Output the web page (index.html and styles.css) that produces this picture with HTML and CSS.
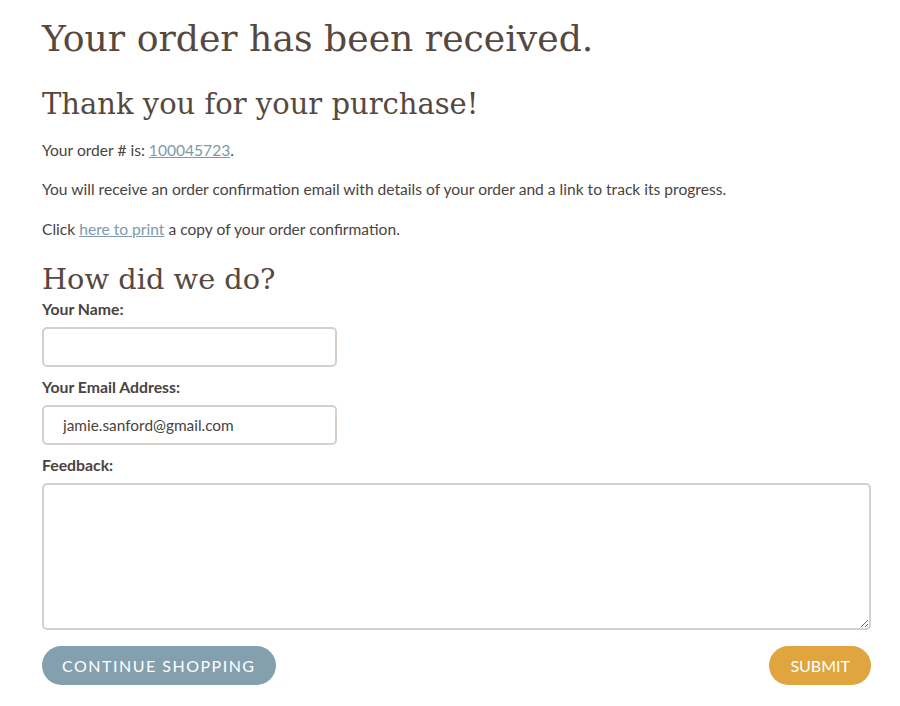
FILE: index.html
```html
<!DOCTYPE html>
<html lang="en">
<head>
    <meta charset="UTF-8">
    <meta name="viewport" content="width=device-width, initial-scale=1.0">
    <title>Order Received</title>
    <link rel="stylesheet" href="styles.css">
</head>
<body>
    <div class="page">
        <h1>Your order has been received.</h1>
        <h2>Thank you for your purchase!</h2>

        <p>Your order # is: <a href="#">100045723</a>.</p>
        <p>You will receive an order confirmation email with details of your order and a link to track its progress.</p>
        <p>Click <a href="#">here to print</a> a copy of your order confirmation.</p>

        <!-- Feedback form -->
        <form class="feedback">
            <h2 class="form-title">How did we do?</h2>
            <label for="name">Your Name:</label>
            <input type="text" id="name" class="field">

            <label for="email">Your Email Address:</label>
            <input type="email" id="email" class="field" value="jamie.sanford@gmail.com">

            <label for="feedback">Feedback:</label>
            <textarea id="feedback"></textarea>

            <div class="actions">
                <a href="#" class="btn btn-continue">Continue Shopping</a>
                <button type="submit" class="btn btn-submit">Submit</button>
            </div>
        </form>
    </div>
</body>
</html>
```

FILE: styles.css
```css
body {
    margin: 0;
    padding: 0;
    font-family: Lato, "Open Sans", sans-serif;
    font-size: 15.6px;
    color: #4a4342;
    background-color: #ffffff;
}
.page {
    padding: 14px 29px 0 42px;
}
h1, h2 {
    font-family: "DejaVu Serif", serif;
    font-weight: normal;
    color: #56483f;
    margin: 0;
}
h1 {
    font-size: 36.2px;
    line-height: 50px;
}
h2 {
    font-size: 29px;
    line-height: 40px;
    margin-top: 20px;
    margin-bottom: 6px;
}
p {
    margin: 0;
    line-height: 20px;
    padding: 9.5px 0 10px;
}
a {
    color: #7d9aaa;
}
.feedback {
    display: flex;
    flex-direction: column;
}
.feedback .form-title {
    font-size: 28.8px;
    margin-top: 10px;
    margin-bottom: 0;
}
label {
    font-weight: bold;
    font-size: 15.8px;
    line-height: 20px;
    margin-bottom: 8px;
}
.field {
    width: 295px;
    height: 40px;
    box-sizing: border-box;
    border: 2px solid #d8cfc8;
    border-radius: 5px;
    padding: 0 19px;
    font-family: Lato, sans-serif;
    font-size: 15.4px;
    color: #4a4342;
    margin-bottom: 10px;
}
textarea {
    height: 147px;
    box-sizing: border-box;
    border: 2px solid #d8cfc8;
    border-radius: 5px;
    margin-bottom: 16px;
}
.actions {
    display: flex;
    justify-content: space-between;
}
.btn {
    display: inline-block;
    height: 39px;
    line-height: 39px;
    border-radius: 20px;
    border: none;
    color: #ffffff;
    font-family: Lato, sans-serif;
    font-size: 16px;
    text-transform: uppercase;
    text-decoration: none;
    padding: 0 20px;
}
.btn-continue {
    background-color: #84a0ae;
    letter-spacing: 1.5px;
}
.btn-submit {
    background-color: #e0a53f;
    padding: 0 21px;
}
```
